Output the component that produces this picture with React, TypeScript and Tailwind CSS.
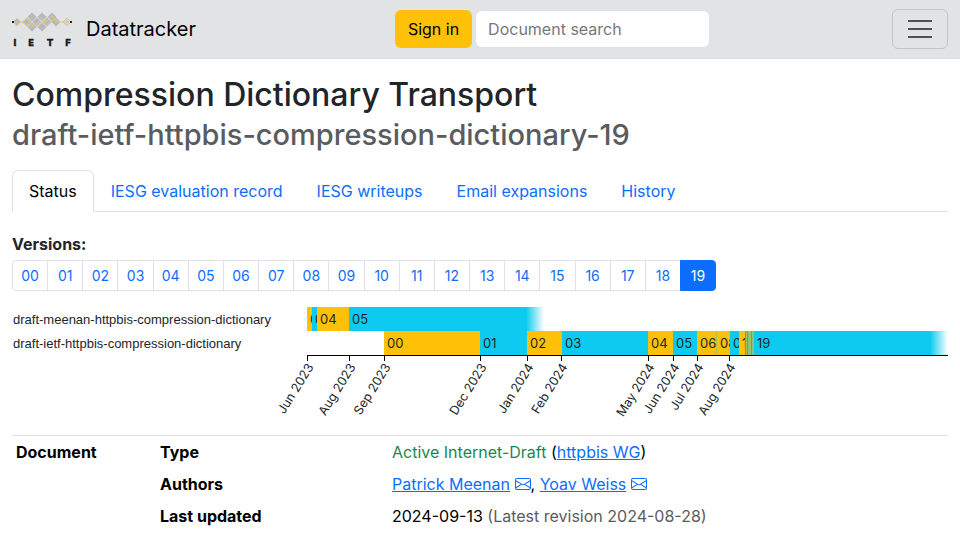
import React from "react";

const AMBER = "#ffc107";
const CYAN = "#0dcaf0";
const GREEN = "#86c67c";
const OLIVE = "#a8c35c";
const SEA = "#55a883";

const tabs = ["Status", "IESG evaluation record", "IESG writeups", "Email expansions", "History"];
const versions = Array.from({ length: 20 }, (_, i) => String(i).padStart(2, "0"));

// Timeline positions are on a scale of 0 to 641.
const SPAN = 641;
const pct = (n: number) => `${(n / SPAN) * 100}%`;

type Segment = { label: string; from: number; to: number; fill: string };

const meenan: Segment[] = [
  { label: "00", from: 0, to: 5, fill: AMBER },
  { label: "03", from: 5, to: 10, fill: CYAN },
  { label: "04", from: 10, to: 42, fill: AMBER },
  { label: "05", from: 42, to: 219, fill: CYAN },
];

const ietf: Segment[] = [
  { label: "00", from: 77, to: 173, fill: AMBER },
  { label: "01", from: 173, to: 220, fill: CYAN },
  { label: "02", from: 220, to: 255, fill: AMBER },
  { label: "03", from: 255, to: 341, fill: CYAN },
  { label: "04", from: 341, to: 366, fill: AMBER },
  { label: "05", from: 366, to: 390, fill: CYAN },
  { label: "06", from: 390, to: 409, fill: AMBER },
  { label: "", from: 409, to: 410, fill: OLIVE },
  { label: "08", from: 410, to: 423, fill: AMBER },
  { label: "09", from: 423, to: 432, fill: CYAN },
  { label: "10", from: 432, to: 438, fill: AMBER },
  { label: "", from: 438, to: 439, fill: SEA },
  { label: "", from: 439, to: 440, fill: OLIVE },
  { label: "", from: 440, to: 441, fill: SEA },
  { label: "", from: 441, to: 443, fill: GREEN },
  { label: "", from: 443, to: 444, fill: OLIVE },
  { label: "", from: 444, to: 445, fill: SEA },
  { label: "", from: 445, to: 447, fill: GREEN },
  { label: "19", from: 447, to: 623, fill: CYAN },
];

const ticks = [
  { at: 0, label: "Jun 2023" },
  { at: 42, label: "Aug 2023" },
  { at: 77, label: "Sep 2023" },
  { at: 173, label: "Dec 2023" },
  { at: 220, label: "Jan 2024" },
  { at: 254, label: "Feb 2024" },
  { at: 341, label: "May 2024" },
  { at: 366, label: "Jun 2024" },
  { at: 390, label: "Jul 2024" },
  { at: 422, label: "Aug 2024" },
];

function Bars({ segments, y }: { segments: Segment[]; y: number }) {
  const end = segments[segments.length - 1].to;
  return (
    <>
      {segments.map((s) => (
        <svg key={s.from} x={pct(s.from)} y={y} width={pct(s.to - s.from)} height="24" overflow="hidden">
          <rect width="100%" height="24" fill={s.fill} shapeRendering="crispEdges" />
          {s.label && (
            <text x="3" y="17" fontSize="13" fill="#212529">
              {s.label}
            </text>
          )}
        </svg>
      ))}
      <rect x={pct(end)} y={y} width={pct(18)} height="24" fill="url(#fade)" />
    </>
  );
}

function Timeline() {
  return (
    <div className="mt-4 flex">
      <div className="w-[295px] shrink-0 pt-px pl-px font-['Liberation_Sans',Arial,sans-serif] text-[13px] leading-6 text-[#212529]">
        <div>draft-meenan-httpbis-compression-dictionary</div>
        <div>draft-ietf-httpbis-compression-dictionary</div>
      </div>
      <svg className="h-32 min-w-0 flex-1 overflow-visible" role="img" aria-label="Document timeline">
        <defs>
          <linearGradient id="fade">
            <stop offset="0" stopColor={CYAN} />
            <stop offset="1" stopColor={CYAN} stopOpacity="0" />
          </linearGradient>
        </defs>
        <Bars segments={meenan} y={0} />
        <Bars segments={ietf} y={24} />
        <rect x="0" y="48" width="100%" height="1" fill="#000" />
        {ticks.map((t) => (
          <svg key={t.label} x={pct(t.at)} y="48" overflow="visible">
            <rect width="1" height="6" fill="#000" shapeRendering="crispEdges" />
            <text transform="translate(7 12) rotate(-58)" textAnchor="end" fontSize="12.5" fill="#212529">
              {t.label}
            </text>
          </svg>
        ))}
      </svg>
    </div>
  );
}

const diamonds = [
  [20, 6], [30, 6], [40, 6],
  [15, 11], [25, 11], [35, 11], [44, 11],
  [20, 16], [30, 16],
];

function Logo() {
  return (
    <svg width="60" height="36" viewBox="0 0 60 36" aria-hidden="true">
      <g fill="#b9b9bd">
        {diamonds.map(([x, y]) => (
          <path key={`${x}-${y}`} d={`M${x} ${y - 4.6}l4.6 4.6-4.6 4.6-4.6-4.6z`} />
        ))}
        <path d="M5 7l4 4-4 4-4-4z" />
      </g>
      <path d="M55 7l4 4-4 4-4-4z" fill="#d8cfc8" stroke="#c9b9a8" strokeWidth=".6" />
      <path
        d="M2 11h8l9 5 5-3 6-6 4 4 6-6 6 6h9M10 11l5-3 5 6 4 1 6-6 5 5 7-6 4 3"
        fill="none"
        stroke="#dfce69"
        strokeWidth=".9"
      />
      <path d="M0 10h2v2H0zM58 10h2v2h-2z" fill="#222" />
      <g fontFamily="DejaVu Sans, sans-serif" fontSize="9" fontWeight="700" fill="#16181b" stroke="#16181b" strokeWidth=".3" textAnchor="middle">
        <text x="3" y="35">I</text>
        <text x="19" y="35">E</text>
        <text x="38" y="35">T</text>
        <text x="56" y="35">F</text>
      </g>
    </svg>
  );
}

function Envelope({ name }: { name: string }) {
  return (
    <a href="#email" aria-label={`Email ${name}`} className="inline-block align-[-2px] text-[#0d6efd]">
      <svg width="16" height="16" viewBox="0 0 16 16" fill="currentColor">
        <path d="M0 4a2 2 0 0 1 2-2h12a2 2 0 0 1 2 2v8a2 2 0 0 1-2 2H2a2 2 0 0 1-2-2V4Zm2-1a1 1 0 0 0-1 1v.217l7 4.2 7-4.2V4a1 1 0 0 0-1-1H2Zm13 2.383-4.708 2.825L15 11.105V5.383Zm-.034 6.876-5.64-3.471L8 9.583l-1.326-.795-5.64 3.47A1 1 0 0 0 2 13h12a1 1 0 0 0 .966-.741ZM1 11.105l4.708-2.897L1 5.383v5.722Z" />
      </svg>
    </a>
  );
}

const link = "text-[#0d6efd] underline";

export default function App() {
  return (
    <div className="bg-white font-[Inter,sans-serif] text-base leading-6 text-[#212529]">
      <nav className="flex items-center justify-between border-b border-[#dddee0] bg-[#e2e3e5] px-3 py-[9px]">
        <a href="#home" className="mr-4 flex items-center text-xl text-black">
          <Logo />
          <span className="ml-[14px]">Datatracker</span>
        </a>
        <form className="flex items-center gap-1" onSubmit={(e) => e.preventDefault()}>
          <button type="button" className="h-[38px] rounded-md bg-[#ffc107] px-[13px] text-black">
            Sign in
          </button>
          <input
            type="search"
            aria-label="Document search"
            placeholder="Document search"
            className="h-9 w-[233px] rounded-md bg-white px-3 placeholder:text-[#75787b]"
          />
        </form>
        <button
          type="button"
          aria-label="Toggle navigation"
          className="flex h-10 w-14 items-center justify-center rounded-md border border-[#c3c4c6]"
        >
          <svg width="30" height="30" viewBox="0 0 30 30" fill="none" stroke="#4f5154" strokeWidth="2">
            <path d="M3 7h24M3 15h24M3 23h24" />
          </svg>
        </button>
      </nav>

      <main className="px-3 pt-4">
        <h1 className="text-[32px] leading-[39px] font-medium">
          Compression Dictionary Transport
          <br />
          <small className="text-[29px] text-[#595c5f]">draft-ietf-httpbis-compression-dictionary-19</small>
        </h1>

        <ul className="mt-4 flex border-b border-[#dee2e6]">
          {tabs.map((t, i) => (
            <li key={t} className="-mb-px">
              <a
                href={`#${t}`}
                className={
                  i === 0
                    ? "block rounded-t-md border border-[#dee2e6] border-b-white bg-white px-4 py-2 text-black"
                    : "block border border-transparent px-4 py-2 text-[#0d6efd]"
                }
              >
                {t}
              </a>
            </li>
          ))}
        </ul>

        <div className="mt-5 font-bold">Versions:</div>
        <ul className="mt-1 flex w-[704px] max-w-full text-center text-sm leading-[21px]">
          {versions.map((v, i) => (
            <li key={v} className="-ml-px flex-1 first:ml-0">
              <a
                href={`#v${v}`}
                className={
                  i === 19
                    ? "block rounded-r-[4px] border border-[#0d6efd] bg-[#0d6efd] py-1 text-white"
                    : i === 0
                      ? "block rounded-l-[4px] border border-[#dee2e6] py-1 text-[#0d6efd]"
                      : "block border border-[#dee2e6] py-1 text-[#0d6efd]"
                }
              >
                {v}
              </a>
            </li>
          ))}
        </ul>

        <Timeline />

        <table className="w-full border-t border-[#dee2e6] text-left text-black">
          <tbody>
            <tr>
              <th scope="row" className="w-36 p-1 font-bold">Document</th>
              <th scope="row" className="w-[232px] p-1 font-bold">Type</th>
              <td className="p-1">
                <span className="text-[#198754]">Active Internet-Draft</span> (
                <a href="#wg" className={link}>httpbis WG</a>)
              </td>
            </tr>
            <tr>
              <th />
              <th scope="row" className="p-1 font-bold">Authors</th>
              <td className="p-1">
                <a href="#pm" className={link}>Patrick Meenan</a> <Envelope name="Patrick Meenan" />,{" "}
                <a href="#yw" className={link}>Yoav Weiss</a> <Envelope name="Yoav Weiss" />
              </td>
            </tr>
            <tr>
              <th />
              <th scope="row" className="p-1 font-bold">Last updated</th>
              <td className="p-1">
                2024-09-13 <span className="text-[#595c5f]">(Latest revision 2024-08-28)</span>
              </td>
            </tr>
          </tbody>
        </table>
      </main>
    </div>
  );
}
